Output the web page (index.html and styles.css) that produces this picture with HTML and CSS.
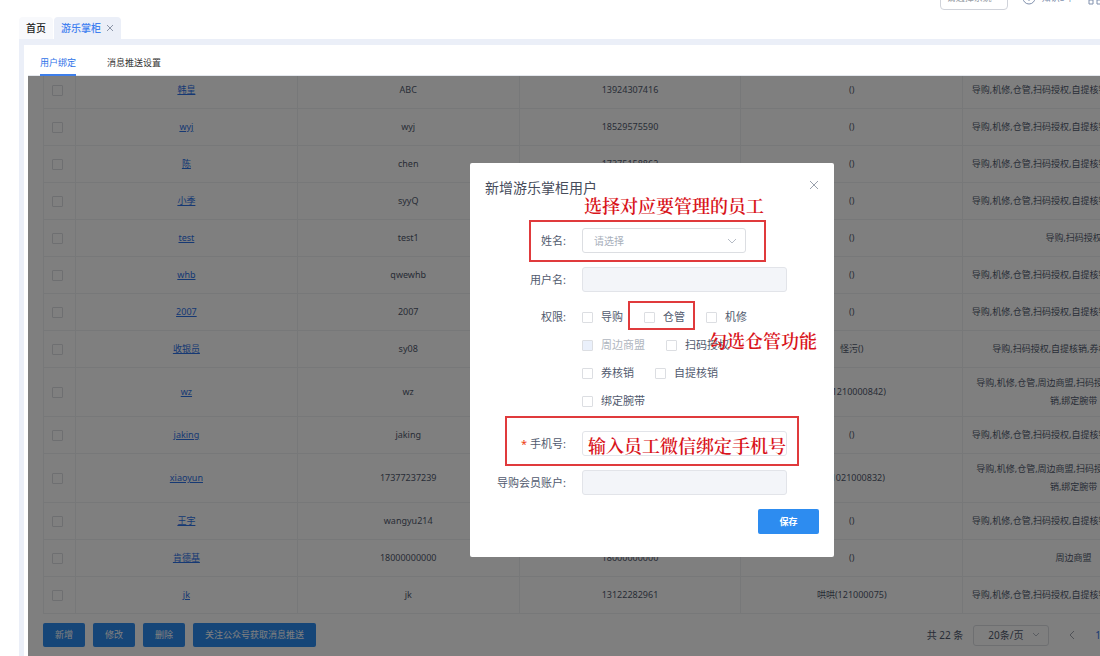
FILE: index.html
```
<!DOCTYPE html>
<html lang="zh-CN">
<head>
<meta charset="utf-8">
<title>游乐掌柜</title>
<link rel="stylesheet" href="styles.css">
</head>
<body>
<header class="topbar">
  <select class="top-select" aria-label="选择系统"><option>请选择系统</option></select>
  <a class="top-link" href="#"><svg width="14" height="14" viewBox="0 0 14 14"><circle cx="7" cy="7" r="6"/><path d="M7 6v4M7 3.500v1"/></svg>知识5车</a>
  <a class="top-link" href="#" aria-label="应用"><svg width="14" height="14" viewBox="0 0 14 14"><path d="M1 1h4v4H1zM9 1h4v4H9zM1 9h4v4H1zM9 9h4v4H9z"/></svg></a>
</header>
<nav class="tabs">
  <a class="tab" href="#">首页</a>
  <a class="tab tab-active" href="#">游乐掌柜<svg width="8" height="8" viewBox="0 0 8 8"><path d="M1 1l6 6M7 1L1 7"/></svg></a>
</nav>
<main class="frame">
  <div class="panel">
    <nav class="subtabs">
      <a class="subtab subtab-active" href="#">用户绑定</a>
      <a class="subtab" href="#">消息推送设置</a>
    </nav>
    <section class="content">
      <div class="table-wrap">
      <table class="grid">
        <colgroup><col class="col-check"><col><col><col><col><col></colgroup>
        <tbody>
        <tr><td><input type="checkbox" aria-label="选择"></td><td><a href="#">韩皇</a></td><td>ABC</td><td>13924307416</td><td>()</td><td>导购,机修,仓管,扫码授权,自提核销,券核销,绑定腕带</td></tr>
        <tr><td><input type="checkbox" aria-label="选择"></td><td><a href="#">wyj</a></td><td>wyj</td><td>18529575590</td><td>()</td><td>导购,机修,仓管,扫码授权,自提核销,券核销,绑定腕带</td></tr>
        <tr><td><input type="checkbox" aria-label="选择"></td><td><a href="#">陈</a></td><td>chen</td><td>17375158862</td><td>()</td><td>导购,机修,仓管,扫码授权,自提核销,券核销,绑定腕带</td></tr>
        <tr><td><input type="checkbox" aria-label="选择"></td><td><a href="#">小季</a></td><td>syyQ</td><td></td><td>()</td><td>导购,机修,仓管,扫码授权,自提核销,券核销,绑定腕带</td></tr>
        <tr><td><input type="checkbox" aria-label="选择"></td><td><a href="#">test</a></td><td>test1</td><td></td><td>()</td><td>导购,扫码授权</td></tr>
        <tr><td><input type="checkbox" aria-label="选择"></td><td><a href="#">whb</a></td><td>qwewhb</td><td></td><td>()</td><td>导购,机修,仓管,扫码授权,自提核销,券核销,绑定腕带</td></tr>
        <tr><td><input type="checkbox" aria-label="选择"></td><td><a href="#">2007</a></td><td>2007</td><td></td><td>()</td><td>导购,机修,仓管,扫码授权,自提核销,券核销,绑定腕带</td></tr>
        <tr><td><input type="checkbox" aria-label="选择"></td><td><a href="#">收银员</a></td><td>sy08</td><td></td><td>怪污()</td><td>导购,扫码授权,自提核销,券核销,绑定腕带</td></tr>
        <tr class="tall"><td><input type="checkbox" aria-label="选择"></td><td><a href="#">wz</a></td><td>wz</td><td></td><td>wz(1210000842)</td><td>导购,机修,仓管,周边商盟,扫码授权,自提核销,券核<br>销,绑定腕带</td></tr>
        <tr><td><input type="checkbox" aria-label="选择"></td><td><a href="#">jaking</a></td><td>jaking</td><td></td><td>()</td><td>导购,机修,仓管,扫码授权,自提核销,券核销,绑定腕带</td></tr>
        <tr class="tall"><td><input type="checkbox" aria-label="选择"></td><td><a href="#">xiaoyun</a></td><td>17377237239</td><td></td><td>xy(1021000832)</td><td>导购,机修,仓管,周边商盟,扫码授权,自提核销,券核<br>销,绑定腕带</td></tr>
        <tr><td><input type="checkbox" aria-label="选择"></td><td><a href="#">王宇</a></td><td>wangyu214</td><td></td><td>()</td><td>导购,机修,仓管,扫码授权,自提核销,券核销,绑定腕带</td></tr>
        <tr><td><input type="checkbox" aria-label="选择"></td><td><a href="#">肯德基</a></td><td>18000000000</td><td>18000000000</td><td>()</td><td>周边商盟</td></tr>
        <tr><td><input type="checkbox" aria-label="选择"></td><td><a href="#">jk</a></td><td>jk</td><td>13122282961</td><td>哄哄(121000075)</td><td>导购,机修,仓管,扫码授权,自提核销,券核销,绑定腕带</td></tr>
        </tbody>
      </table>
      </div>
      <footer class="footer">
        <div class="actions">
          <button class="btn">新增</button><button class="btn">修改</button><button class="btn">删除</button><button class="btn">关注公众号获取消息推送</button>
        </div>
        <div class="pager">
          <span>共 22 条</span>
          <div class="select-box pager-size"><select aria-label="每页条数"><option>20条/页</option></select><svg width="8" height="8" viewBox="0 0 8 8"><path d="M1 2l3 3 3-3"/></svg></div>
          <button class="pager-prev" aria-label="上一页"><svg width="8" height="8" viewBox="0 0 8 8"><path d="M6 0L2 4l4 4"/></svg></button>
          <a class="pager-page" href="#">1</a>
        </div>
      </footer>
      <div class="mask">
        <form class="dialog" role="dialog" aria-labelledby="dialog-title">
          <div class="dialog-head">
            <h1 id="dialog-title">新增游乐掌柜用户</h1>
            <button type="button" class="close" aria-label="关闭"><svg width="10" height="10" viewBox="0 0 10 10"><path d="M1 1l8 8M9 1L1 9"/></svg></button>
          </div>
          <div class="field"><label for="name">姓名:</label><div class="select-box name-box"><select id="name"><option>请选择</option></select><svg width="10" height="10" viewBox="0 0 10 10"><path d="M1 3l4 4 4-4"/></svg></div></div>
          <div class="field"><label for="user">用户名:</label><input class="text" id="user" type="text" disabled></div>
          <fieldset class="field perms">
            <legend>权限:</legend>
            <div class="perm-list">
              <div class="perm-row"><label><input type="checkbox">导购</label><label><input type="checkbox">仓管</label><label><input type="checkbox">机修</label></div>
              <div class="perm-row"><label class="off"><input type="checkbox" disabled>周边商盟</label><label><input type="checkbox">扫码授权</label></div>
              <div class="perm-row"><label><input type="checkbox">券核销</label><label><input type="checkbox">自提核销</label></div>
              <div class="perm-row"><label><input type="checkbox">绑定腕带</label></div>
            </div>
          </fieldset>
          <div class="field"><label for="phone"><span class="required">*</span>手机号:</label><input class="text" id="phone" type="text"></div>
          <div class="field"><label for="account">导购会员账户:</label><input class="text" id="account" type="text" disabled></div>
          <div class="dialog-foot"><button type="button" class="btn save">保存</button></div>
          <div class="frame-mark mark-name"></div>
          <div class="frame-mark mark-perm"></div>
          <div class="frame-mark mark-phone"></div>
          <p class="note note-name">选择对应要管理的员工</p>
          <p class="note note-perm">勾选仓管功能</p>
          <p class="note note-phone">输入员工微信绑定手机号</p>
        </form>
      </div>
    </section>
  </div>
</main>
</body>
</html>
```
FILE: styles.css
```
* { box-sizing: border-box; }
body {
  margin: 0;
  height: 100vh;
  display: flex;
  flex-direction: column;
  overflow: hidden;
  background: #fff;
  color: #515a6e;
  font: 9px/18px "Noto Sans", "Noto Sans CJK SC", sans-serif;
}
a { color: inherit; text-decoration: none; }
svg { fill: none; stroke: currentColor; flex: none; }
button, input, select { font: inherit; color: inherit; margin: 0; }
select { appearance: none; border: 0; background: transparent; outline: 0; }
input[type="checkbox"] {
  appearance: none;
  display: block;
  width: 11px;
  height: 11px;
  border: 1px solid #dcdee2;
  border-radius: 1px;
  background: #fff;
}

.topbar {
  flex: none;
  height: 17px;
  display: flex;
  justify-content: flex-end;
  gap: 14px;
  overflow: hidden;
}
.topbar > * { margin-top: -14px; height: 24px; }
.top-select {
  width: 68px;
  padding: 0 6px;
  border: 1px solid #d0d3da;
  border-radius: 4px;
  color: #9a9fa8;
}
.top-link { display: flex; align-items: center; gap: 6px; color: #8090ad; }
.top-link:last-child { margin-right: -2px; }

.tabs { flex: none; display: flex; gap: 1px; height: 22px; padding-left: 19px; font-size: 10px; font-weight: 500; }
.tab { display: flex; align-items: center; padding: 0 7px; border-radius: 4px 4px 0 0; background: #f8f9fc; color: #222; }
.tab-active { gap: 5px; background: #ebeff8; color: #3f7ff0; }
.tab svg { color: #8b95a8; }

.frame { flex: 1; min-height: 0; display: flex; margin-left: 19px; padding: 6px 0 0 5px; background: #ebeff8; }
.panel { flex: 1; min-width: 0; display: flex; flex-direction: column; padding-left: 4px; background: #fff; }
.subtabs { flex: none; display: flex; gap: 31px; height: 31px; padding-left: 12px; border-bottom: 1px solid #e4e7ed; }
.subtab { height: 31px; line-height: 35px; color: #333; }
.subtab-active { color: #2d72e8; border-bottom: 2px solid #3d7eea; }

.content { position: relative; flex: 1; min-height: 0; overflow: hidden; padding-left: 15px; }
.table-wrap { overflow: hidden; }
.grid { table-layout: fixed; width: 100%; min-width: 1142px; margin-top: -4px; border-collapse: separate; border-spacing: 0; border-left: 1px solid #eff0f3; }
.col-check { width: 32px; }
.grid td { height: 37px; padding: 0 8px; text-align: center; border: solid #eff0f3; border-width: 0 1px 1px 0; white-space: nowrap; }
.grid .tall td { height: 49px; }
.grid a { color: #2d72e8; text-decoration: underline; }

.footer { display: flex; justify-content: space-between; padding-top: 9px; }
.actions { display: flex; gap: 8px; }
.btn { height: 24px; padding: 0 12px; border: 0; border-radius: 2px; background: #2d8cf0; color: #fff; line-height: 18px; }
.pager { display: flex; align-items: center; gap: 10px; margin-right: -1px; font-size: 10px; }
.select-box { display: flex; align-items: center; border: 1px solid #dcdee2; border-radius: 3px; background: #fff; }
.select-box select { flex: 1; min-width: 0; height: 100%; }
.select-box svg { color: #b5bbc5; margin-right: 8px; }
.pager-size { width: 76px; height: 21px; }
.pager-size select { padding-left: 14px; }
.pager-prev { display: flex; justify-content: center; width: 26px; padding: 0; border: 0; background: none; color: #a0a5ae; }
.pager-page { color: #2d72e8; }

.mask { position: absolute; inset: 0; background: rgba(0, 0, 0, .5); }
.dialog {
  position: absolute;
  left: 442px;
  top: 87px;
  width: 364px;
  padding: 15px 15px 23px;
  border-radius: 2px;
  background: #fff;
  font-size: 11px;
  display: flex;
  flex-direction: column;
  gap: 14px;
}
.dialog-head { display: flex; justify-content: space-between; align-items: flex-start; height: 36px; }
.dialog-head h1 { margin: 0; font-size: 14px; line-height: 20px; font-weight: 400; color: #464c5b; }
.close { display: flex; padding: 2px 0; border: 0; background: none; color: #9aa1ad; }
.field { display: grid; grid-template-columns: 86px 1fr; column-gap: 11px; align-items: center; margin: 0; padding: 0; border: 0; }
.field > label { padding-right: 5px; text-align: right; white-space: nowrap; }
.required { margin-right: 3px; color: #ed4014; }
.text { width: 205px; height: 25px; padding: 0 8px; border: 1px solid #e2e4e9; border-radius: 3px; background: #fff; }
.text:disabled { background: #f3f5f9; }
.name-box { width: 164px; height: 25px; font-size: 10px; color: #a8afbb; }
.name-box select { padding-left: 11px; }
.perms { align-items: start; margin-bottom: 3px; }
.perms legend { float: left; padding: 0 5px 0 0; width: 86px; line-height: 22px; text-align: right; }
.perm-list { display: grid; gap: 6px; }
.perm-row { display: flex; gap: 21px; height: 22px; }
.perms { padding-bottom: 2px; }
.perm-row label { display: flex; align-items: center; gap: 8px; }
.off { color: #b0b6c0; }
.off input { background: #eaf0fb; }
.dialog-foot { display: flex; justify-content: flex-end; }
.save { width: 61px; height: 25px; font-size: 9px; font-weight: 700; }

.frame-mark { position: absolute; border: 2px solid #e03a3c; pointer-events: none; }
.mark-name { left: 59px; top: 57px; width: 237px; height: 42px; }
.mark-perm { left: 158px; top: 138px; width: 67px; height: 29px; }
.mark-phone { left: 35px; top: 253px; width: 294px; height: 50px; }
.note { position: absolute; margin: 0; font: 600 18px/24px "Noto Serif CJK SC", "Liberation Serif", "Noto Sans CJK SC", serif; color: #d9141b; white-space: nowrap; }
.note-name { left: 114px; top: 30px; }
.note-perm { left: 239px; top: 165px; }
.note-phone { left: 118px; top: 270px; }
```
